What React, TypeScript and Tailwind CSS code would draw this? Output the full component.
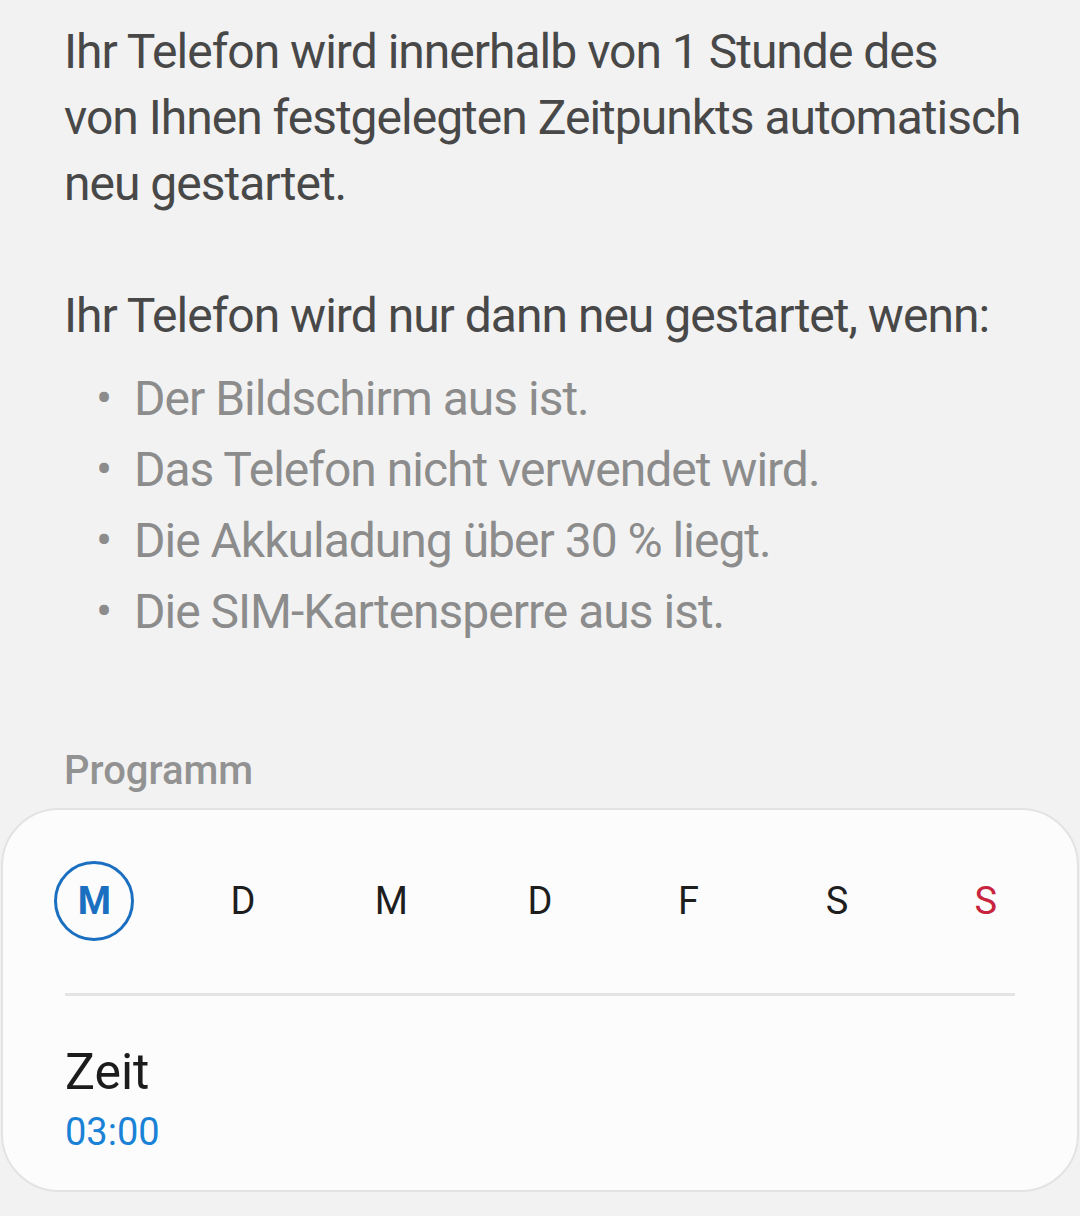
import React from "react";

const conditions = [
  "Der Bildschirm aus ist.",
  "Das Telefon nicht verwendet wird.",
  "Die Akkuladung über 30 % liegt.",
  "Die SIM-Kartensperre aus ist.",
];

const days = [
  { label: "M", selected: true },
  { label: "D" },
  { label: "M" },
  { label: "D" },
  { label: "F" },
  { label: "S" },
  { label: "S", sunday: true },
];

const App: React.FC = () => {
  return (
    <div
      className="w-[1080px] h-[1216px] bg-[#f2f2f2] overflow-hidden"
      style={{ fontFamily: "Roboto, 'Noto Sans', sans-serif" }}
    >
      <div className="pl-[64px] pr-[20px] pt-[19px]">
        <p className="text-[48px] leading-[66px] tracking-[-1px] text-[#484848] whitespace-nowrap">
          Ihr Telefon wird innerhalb von 1 Stunde des
          <br />
          von Ihnen festgelegten Zeitpunkts automatisch
          <br />
          neu gestartet.
        </p>
        <p className="mt-[66px] text-[48px] leading-[66px] tracking-[-1px] text-[#484848]">
          Ihr Telefon wird nur dann neu gestartet, wenn:
        </p>
        <ul className="mt-[14px]">
          {conditions.map((c) => (
            <li key={c} className="flex text-[48px] leading-[71px] tracking-[-1px] text-[#8c8c8c]">
              <span className="w-[70px] pl-[32px]">•</span>
              <span>{c}</span>
            </li>
          ))}
        </ul>
        <div className="mt-[96px] text-[40px] leading-[56px] font-medium text-[#929292]">Programm</div>
      </div>

      <div className="mx-[1px] mt-[9px] rounded-[58px] border-2 border-[#e3e3e3] bg-[#fcfcfc]">
        <div className="grid grid-cols-7 px-[17px] pt-[51px]">
          {days.map((d, i) => (
            <div key={i} className="flex h-[80px] items-center justify-center">
              {d.selected ? (
                <div className="flex h-[80px] w-[80px] items-center justify-center rounded-full border-[3px] border-[#1a6fc0] text-[38px] font-bold text-[#1a6fc0]">
                  {d.label}
                </div>
              ) : (
                <span className={`text-[38px] ${d.sunday ? "text-[#c8233f]" : "text-[#1e1e1e]"}`}>{d.label}</span>
              )}
            </div>
          ))}
        </div>
        <div className="mx-[62px] mt-[52px] h-[3px] bg-[#e4e4e4]" />
        <div className="px-[62px] pt-[43px] pb-[32px]">
          <div className="text-[50px] leading-[67px] text-[#1c1c1c]">Zeit</div>
          <div className="text-[38px] leading-[52px] text-[#1a82d6]">03:00</div>
        </div>
      </div>
    </div>
  );
};

export default App;
